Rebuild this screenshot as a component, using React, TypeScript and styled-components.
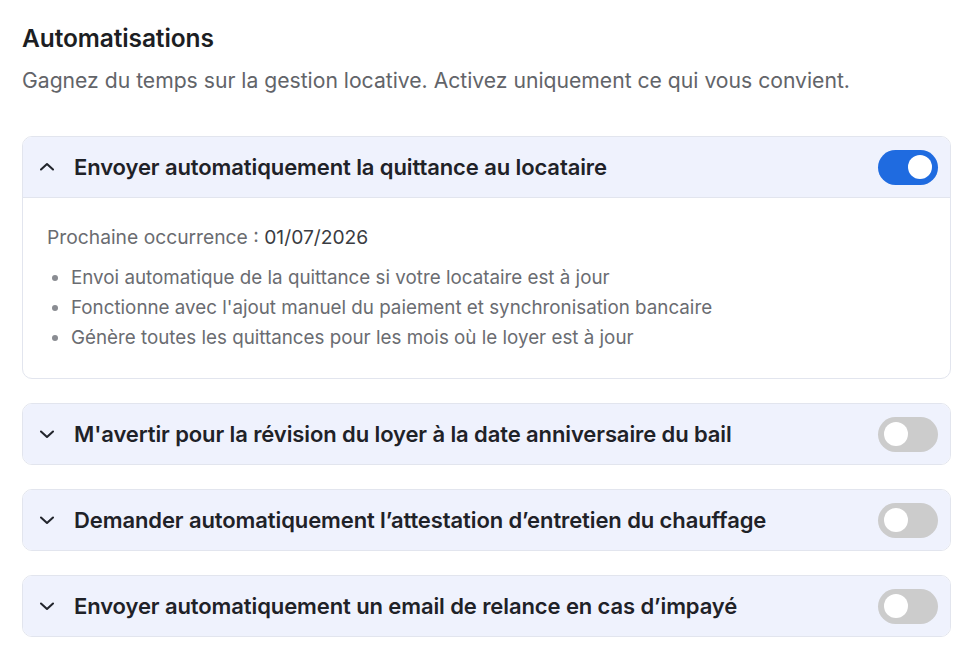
import React, { useState } from "react";
import styled, { createGlobalStyle } from "styled-components";

const GlobalStyle = createGlobalStyle`
  body {
    margin: 0;
    background: #ffffff;
    font-family: "Inter", "Liberation Sans", sans-serif;
  }
`;

const items = [
  {
    title: "Envoyer automatiquement la quittance au locataire",
    on: true,
    open: true,
  },
  {
    title: "M'avertir pour la révision du loyer à la date anniversaire du bail",
    on: false,
    open: false,
  },
  {
    title: "Demander automatiquement l’attestation d’entretien du chauffage",
    on: false,
    open: false,
  },
  {
    title: "Envoyer automatiquement un email de relance en cas d’impayé",
    on: false,
    open: false,
  },
];

const Chevron = ({ up }: { up: boolean }) => (
  <svg width="20" height="20" viewBox="0 0 20 20" fill="none">
    <path
      d={up ? "M4 12.5 L10 7 L16 12.5" : "M4 7.5 L10 13 L16 7.5"}
      stroke="#23262d"
      strokeWidth="2.1"
      strokeLinecap="round"
      strokeLinejoin="round"
    />
  </svg>
);

const App = () => {
  const [state, setState] = useState(items);

  const toggle = (i: number) => {
    setState(state.map((it, k) => (k === i ? { ...it, on: !it.on } : it)));
  };
  const expand = (i: number) => {
    setState(state.map((it, k) => (k === i ? { ...it, open: !it.open } : it)));
  };

  return (
    <>
      <GlobalStyle />
      <Page>
        <Title>Automatisations</Title>
        <Subtitle>
          Gagnez du temps sur la gestion locative. Activez uniquement ce qui
          vous convient.
        </Subtitle>
        <List>
          {state.map((it, i) => (
            <Card key={i}>
              <Header open={it.open}>
                <HeadLeft onClick={() => expand(i)}>
                  <Chevron up={it.open} />
                  <CardTitle>{it.title}</CardTitle>
                </HeadLeft>
                <Switch on={it.on} onClick={() => toggle(i)}>
                  <Knob />
                </Switch>
              </Header>
              {it.open ? (
                <Body>
                  <Next>
                    Prochaine occurrence : <span>01/07/2026</span>
                  </Next>
                  <Bullets>
                    <li>
                      Envoi automatique de la quittance si votre locataire est
                      à jour
                    </li>
                    <li>
                      Fonctionne avec l'ajout manuel du paiement et
                      synchronisation bancaire
                    </li>
                    <li>
                      Génère toutes les quittances pour les mois où le loyer
                      est à jour
                    </li>
                  </Bullets>
                </Body>
              ) : null}
            </Card>
          ))}
        </List>
      </Page>
    </>
  );
};

export default App;

const Page = styled.div`
  padding: 23px 15px 0 22px;
`;

const Title = styled.h1`
  margin: 0;
  font-size: 24.5px;
  font-weight: 600;
  color: #1c1e23;
  line-height: 30px;
  letter-spacing: -0.1px;
`;

const Subtitle = styled.p`
  margin: 14px 0 0;
  font-size: 21.15px;
  color: #626469;
  line-height: 28px;
`;

const List = styled.div`
  margin-top: 41px;
  display: flex;
  flex-direction: column;
  gap: 24px;
`;

const Card = styled.div`
  border: 1px solid #e2e5ee;
  border-radius: 10px;
  overflow: hidden;
  background: #ffffff;
`;

const Header = styled.div<{ open: boolean }>`
  height: 60px;
  display: flex;
  align-items: center;
  justify-content: space-between;
  padding: 0 12px 0 14px;
  background: #eff2fd;
  border-bottom: ${({ open }) => (open ? "1px solid #e2e5ee" : "none")};
`;

const HeadLeft = styled.div`
  display: flex;
  align-items: center;
  gap: 17px;
  cursor: pointer;
`;

const CardTitle = styled.div`
  font-size: 22px;
  font-weight: 600;
  color: #1f2228;
  letter-spacing: -0.1px;
`;

const Switch = styled.div<{ on: boolean }>`
  width: 60px;
  height: 35px;
  border-radius: 18px;
  background: ${({ on }) => (on ? "#1f6be0" : "#cccccc")};
  display: flex;
  align-items: center;
  padding: 0 6px;
  box-sizing: border-box;
  justify-content: ${({ on }) => (on ? "flex-end" : "flex-start")};
  cursor: pointer;
`;

const Knob = styled.div`
  width: 24px;
  height: 24px;
  border-radius: 50%;
  background: #ffffff;
`;

const Body = styled.div`
  padding: 25px 24px 25px 24px;
`;

const Next = styled.div`
  font-size: 19.25px;
  color: #6a6c71;
  line-height: 28px;

  span {
    color: #3a3c42;
  }
`;

const Bullets = styled.ul`
  margin: 12px 0 0;
  padding-left: 24px;
  font-size: 18.8px;
  color: #6a6c71;
  line-height: 30px;

  li::marker {
    color: #8a8c92;
  }
`;
